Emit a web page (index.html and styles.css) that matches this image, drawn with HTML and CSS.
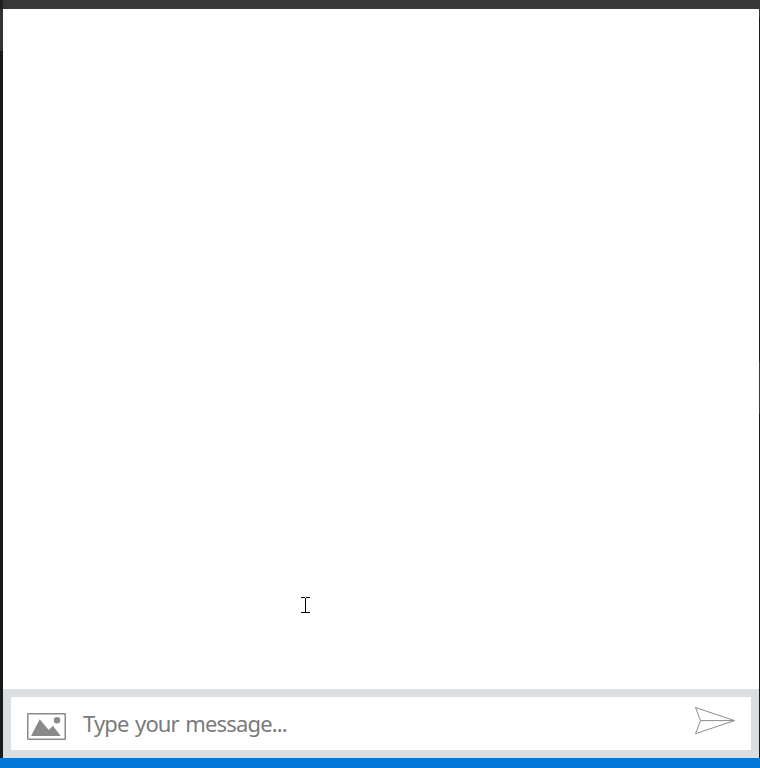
FILE: index.html
```html
<!DOCTYPE html>
<html lang="en">
<head>
<meta charset="utf-8">
<title>Chat</title>
<link rel="stylesheet" href="styles.css">
</head>
<body>
<div class="screen">
  <div class="topbar"></div>
  <div class="middle">
    <div class="edge-left"></div>
    <main class="chat">
      <section class="messages"></section>
      <footer class="composer">
        <div class="composer-box">
          <svg class="image-icon" width="39" height="27" viewBox="0 0 39 27">
            <rect x="0.75" y="0.75" width="37.5" height="25.5" rx="0.6" fill="none" stroke="#8a8a8a" stroke-width="1.5"/>
            <path d="M4 23 L12.7 6.2 L21.7 17 L26 12.8 L33.7 23 Z" fill="#8a8a8a"/>
            <circle cx="30" cy="7.2" r="3.2" fill="#8a8a8a"/>
          </svg>
          <span class="placeholder">Type your message...</span>
          <svg class="send-icon" width="42" height="30" viewBox="0 0 42 30">
            <path d="M1.5 1.5 L40.5 14.6 L1.5 27.7 L6.5 14.6 Z M6.5 14.6 H40" fill="none" stroke="#8c8c8c" stroke-width="1"/>
          </svg>
        </div>
      </footer>
    </main>
    <div class="edge-right"></div>
  </div>
  <div class="statusbar"></div>
  <svg class="cursor" width="9" height="16" viewBox="0 0 9 16" shape-rendering="crispEdges">
    <path d="M0 0h4v1h1v-1h4v1h-4v14h4v1h-9v-1h4v-14h-4z" fill="#000"/>
  </svg>
</div>
</body>
</html>
```
FILE: styles.css
```css
body {
  margin: 0;
  overflow: hidden;
  font-family: "Noto Sans", "Open Sans", sans-serif;
}
.screen {
  position: relative;
  display: flex;
  flex-direction: column;
  width: 760px;
  height: 768px;
}
.topbar {
  height: 9px;
  background: linear-gradient(to right, #1e1e1e 2px, #333 3px, #393939 8px);
}
.middle {
  flex: 1;
  display: flex;
}
.edge-left {
  width: 3px;
  background: linear-gradient(#333 42px, #19191a 42px);
}
.edge-right {
  width: 1px;
  background: linear-gradient(#383838 9px, #19191a 9px, #19191a 352px, #3a3a3a 352px, #3a3a3a 405px, #19191a 405px);
}
.chat {
  flex: 1;
  display: flex;
  flex-direction: column;
  background: #fff;
}
.messages {
  flex: 1;
}
.composer {
  padding: 8px;
  background: #dadee1;
}
.composer-box {
  display: flex;
  align-items: center;
  height: 53px;
  padding: 0 15px 0 16px;
  background: #fff;
}
.image-icon {
  margin-top: 6px;
}
.placeholder {
  flex: 1;
  margin: 0 0 2px 17px;
  font-size: 22px;
  line-height: 30px;
  letter-spacing: -0.85px;
  word-spacing: 1.6px;
  color: #7a7a7a;
  white-space: nowrap;
}
.send-icon {
  margin-bottom: 5px;
}
.statusbar {
  height: 10px;
  background: #0078d9;
}
.cursor {
  position: absolute;
  left: 301px;
  top: 597px;
}
```
